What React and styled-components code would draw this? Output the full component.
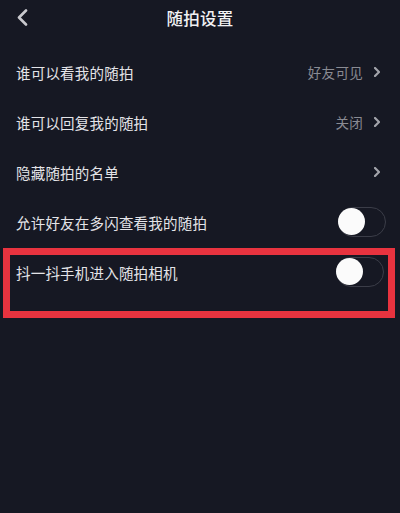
import React from "react";
import styled, { createGlobalStyle } from "styled-components";

const rows = [
  { label: "谁可以看我的随拍", value: "好友可见", arrow: true },
  { label: "谁可以回复我的随拍", value: "关闭", arrow: true },
  { label: "隐藏随拍的名单", arrow: true },
  { label: "允许好友在多闪查看我的随拍", toggle: true },
];

const Chevron = ({ size = 10, color = "#a3a4ab", width = 2.2 }) => (
  <svg width={size * 0.6} height={size} viewBox="0 0 6 10" fill="none">
    <path
      d="M1 1l4 4-4 4"
      stroke={color}
      strokeWidth={width}
      strokeLinecap="round"
      strokeLinejoin="round"
    />
  </svg>
);

const App = () => {
  return (
    <>
      <Global />
      <Page>
        <Header>
          <Back>
            <svg width="12" height="17" viewBox="0 0 12 17" fill="none">
              <path
                d="M10 1.5L3 8.5l7 7"
                stroke="#c9c9ce"
                strokeWidth="2.6"
                strokeLinecap="round"
                strokeLinejoin="round"
              />
            </svg>
          </Back>
          <Title>随拍设置</Title>
        </Header>

        {rows.map((row) => (
          <Row key={row.label}>
            <Label>{row.label}</Label>
            <Right $arrow={row.arrow}>
              {row.value && <Value>{row.value}</Value>}
              {row.arrow && <Chevron />}
              {row.toggle && <Toggle />}
            </Right>
          </Row>
        ))}

        <Highlight>
          <HighRow>
            <Label>抖一抖手机进入随拍相机</Label>
            <Toggle />
          </HighRow>
        </Highlight>
      </Page>
    </>
  );
};

// Global

const Global = createGlobalStyle`
  html, body {
    margin: 0;
    padding: 0;
    background: #161823;
  }
  body {
    font-family: "Noto Sans CJK SC", "Noto Sans", sans-serif;
  }
`;

const Page = styled.div`
  background: #161823;
  height: 513px;
  width: 400px;
  overflow: hidden;
`;

// Header

const Header = styled.div`
  align-items: center;
  display: flex;
  height: 35px;
  justify-content: center;
  position: relative;
  margin-bottom: 12px;
`;
const Back = styled.div`
  display: flex;
  left: 16px;
  position: absolute;
  top: 9px;
`;
const Title = styled.div`
  color: #f1f1f3;
  font-size: 16.5px;
  font-weight: 500;
  letter-spacing: 0.3px;
`;

// Rows

const Row = styled.div`
  align-items: center;
  display: flex;
  height: 50px;
  justify-content: space-between;
  padding: 0 14px 0 16px;
`;
const Label = styled.div`
  color: #e4e4e8;
  font-size: 14.5px;
  letter-spacing: 0.2px;
`;
const Right = styled.div`
  align-items: center;
  display: flex;
  gap: 11px;
  padding-right: ${(p) => (p.$arrow ? "6px" : "4px")};
`;
const Value = styled.div`
  color: #8a8b93;
  font-size: 13.5px;
  letter-spacing: 0.3px;
`;

const Toggle = styled.div`
  border: 1.5px solid #3b3d48;
  border-radius: 16px;
  box-sizing: border-box;
  height: 30px;
  position: relative;
  width: 48px;
  margin-right: -4px;

  &::before {
    background: #fbfbfb;
    border-radius: 50%;
    content: "";
    height: 27px;
    left: -1px;
    position: absolute;
    top: 0px;
    width: 27px;
  }
`;

// Highlight

const Highlight = styled.div`
  border: 7px solid #e8333f;
  height: 56px;
  margin: 1px 5px 0 3px;
`;
const HighRow = styled.div`
  align-items: center;
  display: flex;
  height: 34px;
  justify-content: space-between;
  padding: 0 8px 0 6px;
`;

export default App;
